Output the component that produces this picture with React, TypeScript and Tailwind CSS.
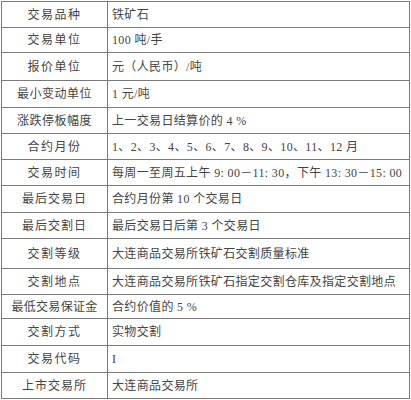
const rows: { label: string; value: string; h: string; track?: string }[] = [
  { label: "交易品种", value: "铁矿石", h: "h-[26px]", track: "tracking-[1.5px]" },
  { label: "交易单位", value: "100 吨/手", h: "h-[25px]", track: "tracking-[1.5px]" },
  { label: "报价单位", value: "元（人民币）/吨", h: "h-[28px]", track: "tracking-[1.5px]" },
  { label: "最小变动单位", value: "1 元/吨", h: "h-[27px]", track: "tracking-[0.5px]" },
  { label: "涨跌停板幅度", value: "上一交易日结算价的 4 %", h: "h-[26px]", track: "tracking-[0.5px]" },
  { label: "合约月份", value: "1、2、3、4、5、6、7、8、9、10、11、12 月", h: "h-[26px]", track: "tracking-[1.5px]" },
  { label: "交易时间", value: "每周一至周五上午 9: 00－11: 30，下午 13: 30－15: 00", h: "h-[26px]", track: "tracking-[1.5px]" },
  { label: "最后交易日", value: "合约月份第 10 个交易日", h: "h-[27px]", track: "tracking-[1px]" },
  { label: "最后交割日", value: "最后交易日后第 3 个交易日", h: "h-[26px]", track: "tracking-[1px]" },
  { label: "交割等级", value: "大连商品交易所铁矿石交割质量标准", h: "h-[30px]", track: "tracking-[1.5px]" },
  { label: "交割地点", value: "大连商品交易所铁矿石指定交割仓库及指定交割地点", h: "h-[26px]", track: "tracking-[1.5px]" },
  { label: "最低交易保证金", value: "合约价值的 5 %", h: "h-[24px]", track: "tracking-[0.3px]" },
  { label: "交割方式", value: "实物交割", h: "h-[27px]", track: "tracking-[1.5px]" },
  { label: "交易代码", value: "I", h: "h-[27px]", track: "tracking-[1.5px]" },
  { label: "上市交易所", value: "大连商品交易所", h: "h-[25px]", track: "tracking-[1px]" },
];

export default function App() {
  return (
    <div className="w-[411px] h-[400px] bg-white overflow-hidden pt-[1px] pl-[1px]">
      <div
        className="w-[409px] border border-[#7a7a7a] text-[12px] leading-none text-[#444]"
        style={{ fontFamily: '"Liberation Serif", "Noto Sans CJK SC", serif' }}
      >
        {rows.map((r, i) => (
          <div
            key={r.label}
            className={`flex ${r.h} ${i < rows.length - 1 ? "border-b border-[#7a7a7a]" : ""}`}
          >
            <div className={`w-[106px] shrink-0 border-r border-[#7a7a7a] flex items-center justify-center ${r.track}`}>
              {r.label}
            </div>
            <div className="flex-1 flex items-center pl-[4px] whitespace-nowrap tracking-[0.35px]">
              {r.value}
            </div>
          </div>
        ))}
      </div>
    </div>
  );
}
